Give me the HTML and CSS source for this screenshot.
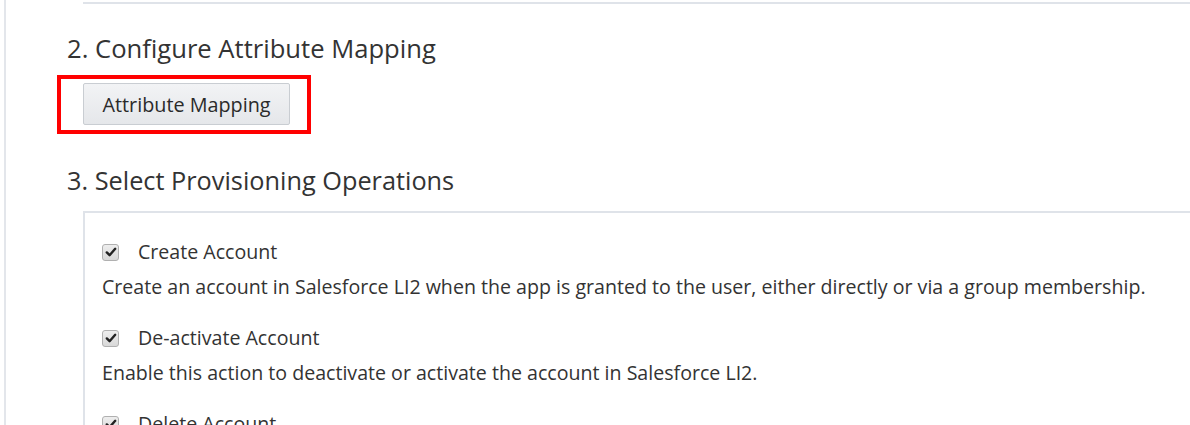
FILE: index.html
```html
<!DOCTYPE html>
<html lang="en">
<head>
<meta charset="utf-8">
<title>Provisioning</title>
<link rel="stylesheet" href="styles.css">
</head>
<body>
<div class="frame">
  <div class="top-panel"><span class="top-text">Configure Attribute Mapping</span></div>

  <h2 class="step-title">2. Configure Attribute Mapping</h2>
  <div class="btn-wrap">
    <button class="btn" type="button">Attribute Mapping</button>
    <span class="highlight"></span>
  </div>

  <h2 class="step-title step-title-3">3. Select Provisioning Operations</h2>
  <div class="ops-panel">
    <div class="op">
      <label class="op-label"><span class="check"><svg viewBox="0 0 16 16" width="16" height="16"><path d="M3.8 8.4 L6.6 11.2 L12.2 4.8" fill="none" stroke="#222" stroke-width="2.4" stroke-linecap="round" stroke-linejoin="round"/></svg></span>Create Account</label>
      <p class="op-desc">Create an account in Salesforce LI2 when the app is granted to the user, either directly or via a group membership.</p>
    </div>
    <div class="op">
      <label class="op-label"><span class="check"><svg viewBox="0 0 16 16" width="16" height="16"><path d="M3.8 8.4 L6.6 11.2 L12.2 4.8" fill="none" stroke="#222" stroke-width="2.4" stroke-linecap="round" stroke-linejoin="round"/></svg></span>De-activate Account</label>
      <p class="op-desc">Enable this action to deactivate or activate the account in Salesforce LI2.</p>
    </div>
    <div class="op">
      <label class="op-label"><span class="check"><svg viewBox="0 0 16 16" width="16" height="16"><path d="M3.8 8.4 L6.6 11.2 L12.2 4.8" fill="none" stroke="#222" stroke-width="2.4" stroke-linecap="round" stroke-linejoin="round"/></svg></span>Delete Account</label>
      <p class="op-desc">Delete the account in Salesforce LI2 when the app is removed from the user.</p>
    </div>
  </div>
</div>
</body>
</html>
```
FILE: styles.css
```css
* { box-sizing: border-box; }
html, body { margin: 0; padding: 0; background: #fff; }
body {
  font-family: "Open Sans", "Noto Sans", sans-serif;
  color: #333;
  height: 425px;
  overflow: hidden;
}
.frame {
  margin-left: 4px;
  border-left: 2px solid #e3e6eb;
  padding-left: 61px;
  min-height: 425px;
}
.top-panel {
  margin-left: 16px;
  margin-top: -30px;
  height: 34px;
  border-bottom: 2px solid #dfe3e9;
  overflow: hidden;
  padding-left: 80px;
  font-size: 25.6px;
  line-height: 30px;
  color: #111;
}
.step-title {
  margin: 0;
  font-weight: 400;
  font-size: 25.6px;
  line-height: 34px;
  color: #333;
  padding-top: 28px;
}
.step-title-3 { padding-top: 38px; font-size: 25.3px; }
.btn-wrap {
  position: relative;
  margin-top: 17px;
  margin-left: 16px;
  width: 207px;
}
.btn {
  display: block;
  width: 207px;
  height: 42px;
  font-family: inherit;
  font-size: 19.8px;
  color: #2a2a2a;
  border: 1px solid #c9cdd2;
  border-radius: 2px;
  background: linear-gradient(#f2f3f5, #e5e7ea);
  padding: 0;
}
.highlight {
  position: absolute;
  left: -26px;
  top: -8px;
  right: -21px;
  bottom: -9px;
  border: 4px solid #ff0000;
  pointer-events: none;
}
.ops-panel {
  margin-top: 14px;
  margin-left: 16px;
  border-top: 2px solid #dfe3e9;
  border-left: 2px solid #dfe3e9;
  padding: 26px 0 0 17px;
}
.op { margin-bottom: 25px; }
.op-label {
  display: flex;
  align-items: center;
  font-size: 19.6px;
  line-height: 26px;
  color: #333;
}
.check {
  width: 17px;
  height: 17px;
  border: 1px solid #b0b0b0;
  border-radius: 3px;
  background: linear-gradient(#eeeeee, #d8d8d8);
  margin-right: 19px;
  display: inline-flex;
}
.check svg { display: block; margin: -0.5px; }
.op-desc {
  margin: 9px 0 0;
  font-size: 19.6px;
  line-height: 26px;
  color: #333;
}
```
